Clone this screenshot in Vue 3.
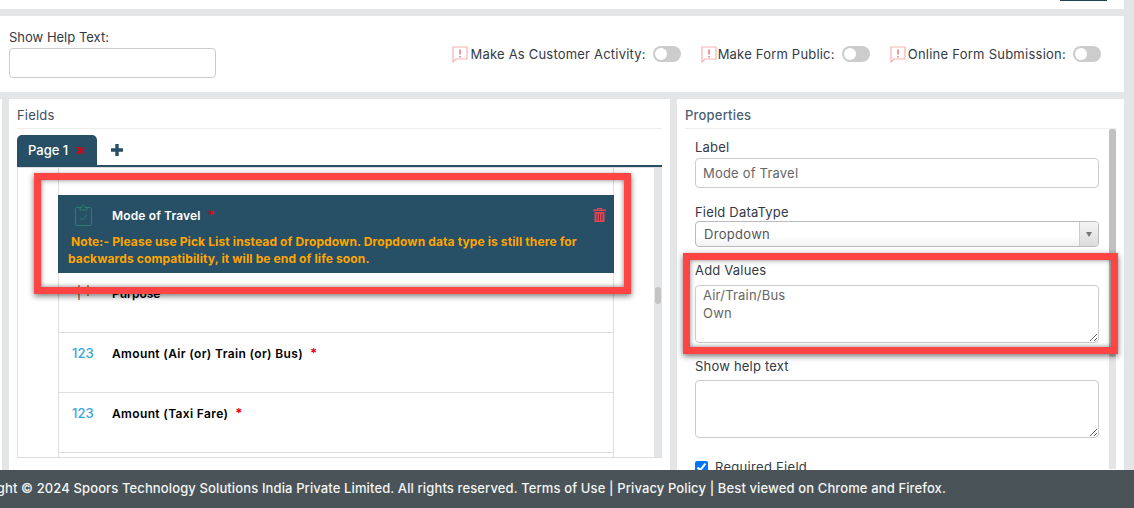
<template>
  <div class="page">
    <div class="top-strip"><span class="save-stub"></span></div>

    <section class="options">
      <div class="help-field">
        <label>Show Help Text:</label>
        <input type="text" class="text-input" />
      </div>
      <div class="switches">
        <div v-for="item in switches" :key="item.label" class="switch-item">
          <svg class="alert-icon" viewBox="0 0 16 17" fill="none">
            <path d="M1 1h14v12H4l-3 3z" fill="#fff" stroke="#f9b0b0" stroke-width="1.2" />
            <path d="M8 3.500v5M8 10v1.600" stroke="#ef7f7f" stroke-width="1.600" />
          </svg>
          <span>{{ item.label }}</span>
          <span class="toggle"><i></i></span>
        </div>
      </div>
    </section>

    <div class="workspace">
      <div class="edge-panel"></div>

      <section class="fields">
        <h3 class="panel-title">Fields</h3>
        <div class="tabs">
          <div class="tab">
            Page 1
            <svg class="tab-x" viewBox="0 0 9 9"><path d="M1 1l7 7M8 1l-7 7" stroke="#e0000f" stroke-width="2" /></svg>
          </div>
          <svg class="tab-add" viewBox="0 0 12 12"><path d="M6 0v12M0 6h12" stroke="#274f66" stroke-width="3.400" /></svg>
        </div>
        <div class="frame">
          <div class="columns">
            <div class="spacer"></div>
            <div class="row selected">
              <div class="row-head">
                <svg class="row-icon clip" viewBox="0 0 17 22" fill="none" stroke="#2a7f70" stroke-width="1">
                  <path d="M5 3.500H1.500a1 1 0 0 0-1 1v16a1 1 0 0 0 1 1h14a1 1 0 0 0 1-1v-16a1 1 0 0 0-1-1H12" />
                  <path d="M5 6V3.500h1.800C7 .2 10 .2 10.200 3.500H12V6z" />
                  <path d="M5 13.500l2.500 2.500 4.500-5" />
                </svg>
                <span class="row-label">Mode of Travel</span>
                <span class="star">*</span>
                <svg class="trash" viewBox="0 0 13 14" fill="#ea4350">
                  <path d="M4 0h5v1.500h4v1.500H0V1.500h4zM5 1v.5h3V1z" fill-rule="evenodd" />
                  <path d="M1.500 4h10v10h-10zM3.500 5.500v7h1v-7zM6 5.500v7h1v-7zM8.500 5.500v7h1v-7z" fill-rule="evenodd" />
                </svg>
              </div>
              <p class="note">&nbsp;Note:- Please use Pick List instead of Dropdown. Dropdown data type is still there for<br />backwards compatibility, it will be end of life soon.</p>
            </div>
            <div class="row">
              <div class="row-head">
                <svg class="row-icon" viewBox="0 0 19 16" fill="none" stroke="#b5652b" stroke-width="1.400">
                  <path d="M7 0v15M16 0v11" />
                </svg>
                <span class="row-label">Purpose</span>
              </div>
            </div>
            <div v-for="label in amountRows" :key="label" class="row">
              <div class="row-head">
                <span class="num-icon">123</span>
                <span class="row-label amount">{{ label }}</span>
                <span class="star">*</span>
              </div>
            </div>
          </div>
          <div class="track"><span class="thumb"></span></div>
        </div>
      </section>

      <section class="properties">
        <h3 class="panel-title muted">Properties</h3>
        <div class="props-body">
          <div class="props-form">
            <label>Label</label>
            <input type="text" class="text-input prop-input" value="Mode of Travel" />

            <label class="after-input">Field DataType</label>
            <div class="select">
              <span>Dropdown</span>
              <span class="select-btn"><i></i></span>
            </div>

            <label class="values-label">Add Values</label>
            <textarea v-model="addValues" class="text-area values"></textarea>

            <label class="help-label">Show help text</label>
            <textarea class="text-area help"></textarea>

            <div class="required">
              <input type="checkbox" checked />
              <span>Required Field</span>
            </div>
          </div>
          <div class="props-track"><span class="props-thumb"></span></div>
        </div>
      </section>
    </div>

    <div class="highlight note-box"></div>
    <div class="highlight values-box"></div>

    <footer class="footer">
      Copyright © 2024 Spoors Technology Solutions India Private Limited. All rights reserved. Terms of Use | Privacy Policy | Best viewed on Chrome and Firefox.
    </footer>
  </div>
</template>

<script setup>
import { ref } from 'vue';

const switches = [
  { label: 'Make As Customer Activity:' },
  { label: 'Make Form Public:' },
  { label: 'Online Form Submission:' },
];

const amountRows = ['Amount (Air (or) Train (or) Bus)', 'Amount (Taxi Fare)'];

const addValues = ref('Air/Train/Bus\nOwn');
</script>

<style>
html,
body {
  margin: 0;
  background: #e4e5e7;
}
</style>

<style scoped>
.page {
  position: relative;
  width: 1134px;
  height: 508px;
  overflow: hidden;
  background: #e4e5e7;
  font-family: Inter, "Open Sans", sans-serif;
  font-size: 13px;
  color: #333a44;
}
.top-strip {
  height: 9px;
  margin-right: 10px;
  background: #fff;
  position: relative;
}
.save-stub {
  position: absolute;
  top: 0;
  right: 17px;
  width: 47px;
  height: 1px;
  background: #1d4254;
}
.options {
  display: flex;
  justify-content: space-between;
  height: 76px;
  margin: 7px 10px 7px 0;
  background: #fff;
  box-sizing: border-box;
  padding: 14px 23px 0 9px;
}
.help-field label {
  display: block;
  line-height: 14px;
  margin-bottom: 4px;
}
.text-input {
  display: block;
  box-sizing: border-box;
  width: 207px;
  height: 30px;
  border: 1px solid #ccc;
  border-radius: 4px;
  background: #fff;
  font: inherit;
  color: #666;
  padding: 0 7px;
  outline: none;
}
.switches {
  display: flex;
  align-items: center;
  gap: 20px;
  height: 48px;
  letter-spacing: 0.2px;
  line-height: 18px;
}
.switch-item {
  display: flex;
  align-items: center;
}
.switch-item:first-child .alert-icon {
  margin-right: 3px;
}
.switch-item:nth-child(2) .alert-icon {
  margin-right: 1px;
}
.switch-item:last-child {
  letter-spacing: 0.25px;
}
.alert-icon {
  width: 16px;
  height: 17px;
  margin-right: 2px;
}
.toggle {
  display: inline-block;
  width: 28px;
  height: 16px;
  margin-left: 7px;
  border-radius: 8px;
  background: #ccc;
  position: relative;
}
.toggle i {
  position: absolute;
  top: 2px;
  left: 2px;
  width: 12px;
  height: 12px;
  border-radius: 50%;
  background: #fff;
}
.workspace {
  display: flex;
  height: 409px;
}
.edge-panel {
  width: 2px;
  margin-right: 7px;
  background: #fff;
}
.fields {
  width: 661px;
  margin-right: 7px;
  box-sizing: border-box;
  padding: 0 8px;
  background: #fff;
}
.properties {
  width: 447px;
  box-sizing: border-box;
  padding: 0 8px;
  background: #fff;
}
.panel-title {
  margin: 0;
  height: 30px;
  box-sizing: border-box;
  border-bottom: 1px solid #eee;
  font-size: 13px;
  font-weight: 400;
  line-height: 33px;
  letter-spacing: 0.2px;
  color: #3c4f5c;
}
.panel-title.muted {
  color: #4a6274;
  font-weight: 500;
}
.tabs {
  display: flex;
  align-items: center;
  height: 32px;
  margin-top: 6px;
  border-bottom: 2px solid #274f66;
  box-sizing: border-box;
}
.tab {
  display: flex;
  align-items: center;
  width: 80px;
  height: 30px;
  box-sizing: border-box;
  padding-left: 11px;
  border-radius: 5px 5px 0 0;
  background: #274f66;
  color: #fff;
  font-weight: 500;
  white-space: nowrap;
}
.tab-x {
  flex: none;
  width: 9px;
  height: 9px;
  margin-left: 8px;
}
.tab-add {
  width: 12px;
  height: 12px;
  margin-left: 14px;
}
.frame {
  display: flex;
  justify-content: space-between;
  height: 291px;
  box-sizing: border-box;
  border: 1px solid #ddd;
  border-right: 0;
}
.columns {
  width: 556px;
  height: 290px;
  margin-left: 40px;
  box-sizing: border-box;
  border-left: 1px solid #ddd;
  border-right: 1px solid #ddd;
}
.spacer {
  height: 27px;
}
.row {
  height: 60px;
  box-sizing: border-box;
  border-bottom: 1px solid #ddd;
  padding: 11px 8px 0 13px;
}
.row.selected {
  height: 78px;
  margin-left: -1px;
  margin-right: -1px;
  border-bottom: 0;
  background: #274f66;
}
.row-head {
  display: flex;
  align-items: center;
  height: 18px;
}
.row-icon {
  width: 19px;
  height: 16px;
  margin-right: 21px;
}
.row-icon.clip {
  width: 17px;
  height: 22px;
  margin-left: 4px;
  margin-right: 20px;
}
.row-label {
  font-size: 12px;
  font-weight: 600;
  color: #000;
  white-space: nowrap;
}
.row-label.amount {
  letter-spacing: 0.36px;
}
.selected .row-label {
  color: #fff;
  letter-spacing: 0.14px;
}
.star {
  margin-left: 7px;
  color: #e8001c;
  font-size: 13px;
  font-weight: 700;
}
.num-icon {
  width: 40px;
  font-size: 13px;
  font-weight: 500;
  color: #3aa6e0;
}
.trash {
  width: 13px;
  height: 14px;
  margin-left: auto;
}
.note {
  margin: 9px 0 0 -3px;
  font-size: 12px;
  font-weight: 700;
  line-height: 17px;
  letter-spacing: 0.12px;
  color: #ffa500;
  white-space: nowrap;
}
.track {
  width: 8px;
  background: #e4e5e7;
  position: relative;
}
.thumb {
  position: absolute;
  top: 119px;
  left: 1px;
  width: 6px;
  height: 17px;
  border-radius: 3px;
  background: #c4c4c4;
}
.props-body {
  display: flex;
  justify-content: space-between;
  height: 340px;
}
.props-form {
  width: 404px;
  margin-left: 10px;
  padding-top: 9px;
}
.props-form label {
  display: block;
  line-height: 18px;
  letter-spacing: 0.2px;
}
.prop-input {
  width: 404px;
  margin-top: 2px;
  color: #666;
  letter-spacing: 0.2px;
}
.after-input {
  margin-top: 15px;
}
.select {
  display: flex;
  align-items: center;
  justify-content: space-between;
  box-sizing: border-box;
  height: 26px;
  padding-left: 8px;
  border: 1px solid #bbb;
  border-radius: 4px;
  background: linear-gradient(#fff 60%, #f1f1f1);
  color: #555;
  letter-spacing: 0.3px;
}
.select-btn {
  display: flex;
  align-items: center;
  justify-content: center;
  width: 18px;
  height: 24px;
  border-left: 1px solid #ccc;
  background: linear-gradient(#f4f4f4, #dcdcdc);
  border-radius: 0 3px 3px 0;
}
.select-btn i {
  border-top: 5px solid #777;
  border-left: 3px solid transparent;
  border-right: 3px solid transparent;
}
.values-label {
  margin-top: 14px;
}
.text-area {
  display: block;
  box-sizing: border-box;
  width: 404px;
  height: 58px;
  border: 1px solid #ccc;
  border-radius: 4px;
  font: inherit;
  color: #666;
  letter-spacing: 0.2px;
  line-height: 18px;
  padding: 0 7px;
  margin: 0;
  outline: none;
  resize: vertical;
}
.values {
  margin-top: 6px;
}
.help-label {
  margin-top: 14px;
}
.help {
  margin-top: 5px;
}
.required {
  display: flex;
  align-items: center;
  gap: 7px;
  margin-top: 21px;
  letter-spacing: 0.3px;
}
.required input {
  width: 13px;
  height: 13px;
  margin: 0;
}
.props-track {
  width: 7px;
  height: 340px;
  background: #e4e5e7;
}
.props-thumb {
  display: block;
  width: 7px;
  height: 228px;
  border-radius: 3px;
  background: #c1c1c1;
}
.highlight {
  position: absolute;
  box-sizing: border-box;
  border: 7px solid #ff4444;
  box-shadow: 0 2px 6px rgba(0, 0, 0, 0.55), inset 0 0 5px rgba(0, 0, 0, 0.5);
}
.note-box {
  left: 34px;
  top: 173px;
  width: 597px;
  height: 121px;
}
.values-box {
  left: 683px;
  top: 253px;
  width: 435px;
  height: 101px;
}
.footer {
  position: absolute;
  left: 0;
  right: 0;
  bottom: 0;
  height: 38px;
  background: #4a5458;
  color: #f4f4f4;
  font-size: 13px;
  font-weight: 500;
  letter-spacing: 0.12px;
  line-height: 37px;
  white-space: nowrap;
  text-indent: -45px;
}
</style>
